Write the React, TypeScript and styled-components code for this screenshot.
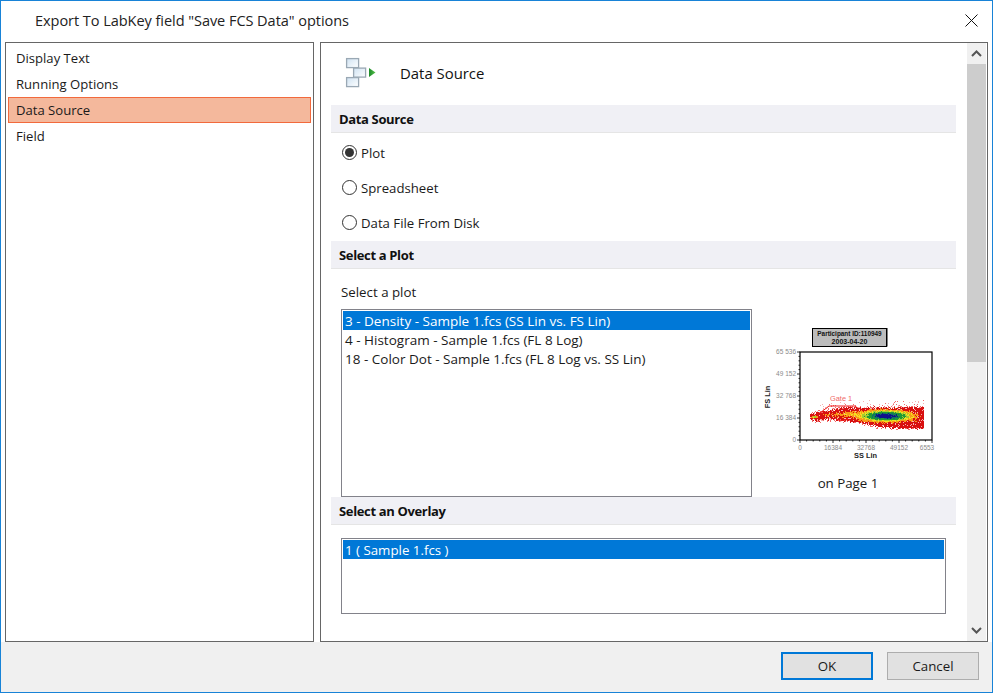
import React, { useMemo } from "react";
import styled, { createGlobalStyle } from "styled-components";

const Global = createGlobalStyle`
  html, body { margin: 0; padding: 0; background: #fff; }
  * { box-sizing: border-box; }
  body { font-family: "Open Sans", "Noto Sans", "Liberation Sans", sans-serif; color: #111; }
`;

const Window = styled.div`
  width: 993px; height: 693px; border: 1px solid #1883d7; background: #fff;
  display: flex; flex-direction: column; overflow: hidden;
`;
const TitleBar = styled.div`
  height: 41px; flex: none; display: flex; align-items: center; justify-content: space-between;
  padding: 0 14px 3px 34px;
`;
const Title = styled.div`font-size: 14.55px; letter-spacing: -0.06px; color: #222;`;
const CloseIcon = styled.svg`width: 13px; height: 13px; display: block;`;
const Body = styled.div`
  flex: 1; min-height: 0; display: flex; gap: 6px; padding: 0 0 0 4px;
`;
const Nav = styled.div`
  width: 309px; height: 600px; border: 1px solid #666; padding: 2px; display: flex; flex-direction: column;
`;
const NavItem = styled.div<{ $active?: boolean }>`
  height: 26px; flex: none; display: flex; align-items: center; padding-left: 7px; font-size: 13.1px;
  border: 1px solid ${(p) => (p.$active ? "#f2693c" : "transparent")};
  background: ${(p) => (p.$active ? "#f4b89c" : "transparent")};
  color: #1a1a1a;
`;
const Panel = styled.div`
  width: 668px; height: 600px; border: 1px solid #666; display: flex; padding-right: 1px;
`;
const Content = styled.div`
  width: 646px; overflow: hidden; padding: 0 11px 0 10px; flex: none;
`;
const PageHead = styled.div`
  height: 62px; display: flex; align-items: center; padding-left: 14px; gap: 23px; font-size: 14.9px; padding-bottom: 2px;
`;
const Section = styled.div`
  height: 28px; background: #f0f0f5; border-bottom: 1px solid #e5e5e5; display: flex; align-items: center;
  padding-left: 8px; font-weight: 700; font-size: 13px; letter-spacing: -0.35px; color: #111;
`;
const RadioGroup = styled.div`padding: 2px 0 1px 11px;`;
const RadioRow = styled.div`
  height: 35px; display: flex; align-items: center; font-size: 13.2px; gap: 4px; color: #1a1a1a;
`;
const RadioMark = styled.span<{ $on?: boolean }>`
  width: 15px; height: 15px; border-radius: 50%; border: 1px solid #333; background: #fff; display: flex;
  align-items: center; justify-content: center; flex: none;
  &::after { content: ""; width: 9px; height: 9px; border-radius: 50%; background: ${(p) => (p.$on ? "#333" : "transparent")}; }
`;
const FieldLabel = styled.div`
  height: 40px; display: flex; align-items: flex-end; padding: 0 0 8px 10px; font-size: 13.3px; color: #1a1a1a;
`;
const PlotRow = styled.div`display: flex; padding-left: 10px; height: 188px;`;
const ListBox = styled.div<{ $w: number; $h: number }>`
  width: ${(p) => p.$w}px; height: ${(p) => p.$h}px; border: 1px solid #82828a; padding: 1px; flex: none; background: #fff;
`;
const ListRow = styled.div<{ $sel?: boolean; $size?: number }>`
  height: 19px; display: flex; align-items: center; padding-left: 2px; font-size: ${(p) => p.$size ?? 13.5}px; white-space: nowrap;
  background: ${(p) => (p.$sel ? "#0078d7" : "transparent")};
  color: ${(p) => (p.$sel ? "#fff" : "#1a1a1a")};
`;
const Preview = styled.div`width: 192px; flex: none; display: flex; flex-direction: column;`;
const PlotPic = styled.svg`width: 192px; height: 148px; margin: 17px 0 0 -2px; display: block; flex: none;`;
const PageNote = styled.div`text-align: center; font-size: 13.3px; color: #1a1a1a; margin-top: 0; padding-right: 0;`;
const OverlayWrap = styled.div`padding: 13px 0 0 10px;`;
const Scrollbar = styled.div`width: 19px; flex: none; background: #f0f0f0; display: flex; flex-direction: column;`;
const ScrollBtn = styled.div`height: 21px; flex: none; display: flex; align-items: center; justify-content: center;`;
const ScrollThumb = styled.div`height: 298px; background: #cdcdcd; flex: none;`;
const ScrollGap = styled.div`flex: 1;`;
const Footer = styled.div`
  flex: none; height: 50px; background: #f0f0f0; display: flex; justify-content: flex-end; gap: 14px; padding: 10px 13px 0 0;
`;
const Button = styled.div<{ $primary?: boolean }>`
  width: 92px; height: 28px; display: flex; align-items: center; justify-content: center; font-size: 13.3px; color: #1a1a1a;
  background: #e1e1e1; border: ${(p) => (p.$primary ? "2px solid #0078d7" : "1px solid #adadad")};
`;

function FlowIcon() {
  const box = (x: number, y: number) => (
    <rect key={`${x}-${y}`} x={x + 0.6} y={y + 0.6} width={12} height={9} fill="url(#boxFill)" stroke="#9aa8b4" strokeWidth="1.3" />
  );
  return (
    <svg width="32" height="32" viewBox="0 0 32 32" style={{ display: "block", flex: "none" }}>
      <defs>
        <linearGradient id="boxFill" x1="0" y1="0" x2="1" y2="1">
          <stop offset="0" stopColor="#cfe2f2" />
          <stop offset="1" stopColor="#ffffff" />
        </linearGradient>
        <linearGradient id="arrowFill" x1="0" y1="0" x2="1" y2="0">
          <stop offset="0" stopColor="#1b8a2a" />
          <stop offset="1" stopColor="#58c04a" />
        </linearGradient>
      </defs>
      {box(1, 1)}
      {box(1, 20)}
      {box(8, 10.5)}
      <path d="M24 11 L30.5 15.5 L24 20 Z" fill="url(#arrowFill)" />
    </svg>
  );
}

type Pix = Record<string, string>;

function buildHeat(): Pix {
  let seed = 12345;
  const rnd = () => {
    seed = (seed * 16807) % 2147483647;
    return seed / 2147483647;
  };
  const out: Record<string, string[]> = {};
  const put = (c: string, x: number, y: number) => {
    (out[c] = out[c] || []).push(`M${x} ${y}h1v1h-1z`);
  };
  const interp = (pts: number[][], x: number) => {
    for (let i = 0; i < pts.length - 1; i++) {
      if (x <= pts[i + 1][0]) {
        const t = (x - pts[i][0]) / (pts[i + 1][0] - pts[i][0]);
        return pts[i][1] + t * (pts[i + 1][1] - pts[i][1]);
      }
    }
    return pts[pts.length - 1][1];
  };
  const top = [[60, 88],[66, 87],[76, 86],[84, 84],[96, 82],[110, 82],[140, 82],[173, 82]];
  const bot = [[60, 92],[66, 94],[76, 92],[90, 93],[110, 95],[125, 99],[150, 101],[173, 101]];
  for (let x = 60; x < 174; x++) {
    for (let y = 70; y < 106; y++) {
      const t = interp(top, x);
      const b = interp(bot, x);
      const j = rnd() * 2.4 - 1.2;
      if (y < t - 1 + j || y > b + 1 + j) {
        const d = y < t ? t - y : y - b;
        if (d < 9 && y < t && rnd() < 0.2 / (d * 0.5) && x > 66) put(rnd() < 0.5 ? "#f7b0b0" : "#f26a6a", x, y);
        else if (d < 3 && rnd() < 0.25) put("#f26a6a", x, y);
        continue;
      }
      const core = Math.exp(-Math.pow((x - 135) / 26, 2) - Math.pow((y - 89.5) / 5.6, 2));
      const tip = Math.exp(-Math.pow((x - 64) / 3, 2) - Math.pow((y - 90.5) / 1.6, 2));
      const band = 0.36 * Math.exp(-Math.pow((x - 112) / 42, 2) - Math.pow((y - 88) / 4, 2));
      const tail = 0.3 * Math.exp(-Math.pow((x - 160) / 12, 2) - Math.pow((y - 91) / 6, 2));
      const v = Math.max(core, tip * 0.55, band, tail) + (rnd() - 0.5) * 0.18;
      let c = "#d81010";
      if (v > 0.86) c = "#10108c";
      else if (v > 0.76) c = "#0f6f66";
      else if (v > 0.58) c = "#1f9a34";
      else if (v > 0.46) c = "#a4cc30";
      else if (v > 0.36) c = "#f4e020";
      else if (v > 0.22) c = "#f89a18";
      else if (rnd() < 0.12) c = "#f7b0b0";
      put(c, x, y);
    }
  }
  const res: Pix = {};
  Object.keys(out).forEach((k) => (res[k] = out[k].join("")));
  return res;
}

const TXT = { fontFamily: '"Liberation Sans", sans-serif' };

function DensityPlot() {
  const heat = useMemo(buildHeat, []);
  const yTicks = [["65 536", 26], ["49 152", 48], ["32 768", 70], ["16 384", 92], ["0", 114]] as const;
  const xTicks = [["0", 50], ["16384", 83], ["32768", 116], ["49152", 149], ["6553", 177]] as const;
  const minor: string[] = [];
  for (let i = 0; i <= 20; i++) {
    const y = 26 + i * 4.4;
    minor.push(`M${i % 5 === 0 ? 47 : 48.5} ${y}H50`);
    const x = 50 + i * 6.6;
    minor.push(`M${x} 114V${i % 5 === 0 ? 117 : 115.5}`);
  }
  return (
    <PlotPic viewBox="0 0 192 148">
      <rect x="62.5" y="2.5" width="74" height="18" fill="#bcbcbc" stroke="#000" strokeWidth="1" />
      <path d="M62 20.5H137V2" stroke="#000" strokeWidth="1" fill="none" />
      <text x="99.5" y="10" textAnchor="middle" fontSize="6.4" fontWeight="700" fill="#111" style={TXT}>Participant ID:110949</text>
      <text x="99.5" y="17.5" textAnchor="middle" fontSize="7" fontWeight="700" fill="#111" style={TXT}>2003-04-20</text>
      <rect x="50" y="26" width="132" height="88" fill="#fff" stroke="#000" strokeWidth="1.2" />
      <path d={minor.join("")} stroke="#000" strokeWidth="0.8" fill="none" />
      {yTicks.map(([l, y]) => (
        <text key={l} x="46" y={y + 2.4} textAnchor="end" fontSize="6.5" fill="#8a8a8a" style={TXT}>{l}</text>
      ))}
      {xTicks.map(([l, x]) => (
        <text key={l} x={x} y="124" textAnchor="middle" fontSize="6.5" fill="#8a8a8a" style={TXT}>{l}</text>
      ))}
      <text x="115.5" y="132" textAnchor="middle" fontSize="7.4" fontWeight="700" fill="#222" style={TXT}>SS Lin</text>
      <text transform="translate(20,71) rotate(-90)" textAnchor="middle" fontSize="7.4" fontWeight="700" fill="#222" style={TXT}>FS Lin</text>
      {Object.keys(heat).map((c) => (
        <path key={c} d={heat[c]} fill={c} />
      ))}
      <path d="M70 87 L79 80 L106 80 L105 82 M85 92 L90 95 L98 93" stroke="#ee1c1c" strokeWidth="1" fill="none" />
      <text x="80" y="75" fontSize="7.4" fill="#f06a6a" style={TXT}>Gate 1</text>
    </PlotPic>
  );
}

export default function App() {
  return (
    <>
      <Global />
      <Window>
        <TitleBar>
          <Title>Export To LabKey field "Save FCS Data" options</Title>
          <CloseIcon viewBox="0 0 13 13">
            <path d="M0.5 0.5L12.5 12.5M12.5 0.5L0.5 12.5" stroke="#111" strokeWidth="1" fill="none" />
          </CloseIcon>
        </TitleBar>
        <Body>
          <Nav>
            <NavItem>Display Text</NavItem>
            <NavItem>Running Options</NavItem>
            <NavItem $active>Data Source</NavItem>
            <NavItem>Field</NavItem>
          </Nav>
          <Panel>
            <Content>
              <PageHead>
                <FlowIcon />
                <span>Data Source</span>
              </PageHead>
              <Section>Data Source</Section>
              <RadioGroup>
                <RadioRow><RadioMark $on />Plot</RadioRow>
                <RadioRow><RadioMark />Spreadsheet</RadioRow>
                <RadioRow><RadioMark />Data File From Disk</RadioRow>
              </RadioGroup>
              <Section>Select a Plot</Section>
              <FieldLabel>Select a plot</FieldLabel>
              <PlotRow>
                <ListBox $w={411} $h={188}>
                  <ListRow $sel>3 - Density - Sample 1.fcs (SS Lin vs. FS Lin)</ListRow>
                  <ListRow>4 - Histogram - Sample 1.fcs (FL 8 Log)</ListRow>
                  <ListRow>18 - Color Dot - Sample 1.fcs (FL 8 Log vs. SS Lin)</ListRow>
                </ListBox>
                <Preview>
                  <DensityPlot />
                  <PageNote>on Page 1</PageNote>
                </Preview>
              </PlotRow>
              <Section>Select an Overlay</Section>
              <OverlayWrap>
                <ListBox $w={605} $h={76}>
                  <ListRow $sel $size={13.3}>1 ( Sample 1.fcs )</ListRow>
                </ListBox>
              </OverlayWrap>
            </Content>
            <Scrollbar>
              <ScrollBtn>
                <svg width="11" height="7" viewBox="0 0 11 7"><path d="M1 6L5.5 1.5L10 6" stroke="#555" strokeWidth="2" fill="none" /></svg>
              </ScrollBtn>
              <ScrollThumb />
              <ScrollGap />
              <ScrollBtn>
                <svg width="11" height="7" viewBox="0 0 11 7"><path d="M1 1L5.5 5.5L10 1" stroke="#555" strokeWidth="2" fill="none" /></svg>
              </ScrollBtn>
            </Scrollbar>
          </Panel>
        </Body>
        <Footer>
          <Button $primary>OK</Button>
          <Button>Cancel</Button>
        </Footer>
      </Window>
    </>
  );
}
